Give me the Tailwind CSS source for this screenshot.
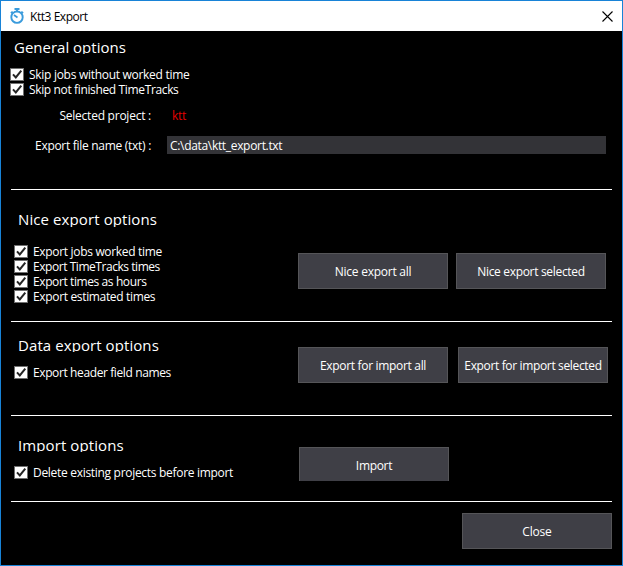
<!DOCTYPE html>
<html lang="en">
<head>
<meta charset="utf-8">
<title>Ktt3 Export</title>
<script src="https://cdn.jsdelivr.net/npm/@tailwindcss/browser@4"></script>
</head>
<body class="bg-black">
<svg class="hidden"><defs>
  <symbol id="box" viewBox="0 0 14 13"><rect x=".5" y=".5" width="13" height="12" fill="#fff" stroke="#707070"/><path d="M3 6.4 5.8 9.4 11.3 2.6" fill="none" stroke="#252525" stroke-width="2"/></symbol>
</defs></svg>
<div class="flex h-[566px] w-[623px] flex-col border border-[#1883d7] bg-black font-['Open_Sans','Noto_Sans',sans-serif] text-[12px] leading-[15px] tracking-[-0.32px] whitespace-nowrap text-white">
  <header class="flex h-[30px] shrink-0 items-center bg-white pr-[9px] pl-[8px] text-black">
    <svg class="h-4 w-4" viewBox="0 0 16 16" fill="none" stroke="#3a9bdc"><circle cx="8" cy="9.2" r="5.7" stroke-width="1.9"/><path d="M5.5 1H10.5M8 1V3.5M12.3 3.6 14 5.2M3.7 3.6 2 5.2" stroke-width="1.9"/><path d="M5 7 8.5 9.5" stroke-width="1.7"/></svg>
    <span class="ml-[5px] grow tracking-[-0.45px]">Ktt3 Export</span>
    <svg class="h-[11px] w-[11px]" viewBox="0 0 11 11"><path d="M.5.5 10.5 10.5M10.5.5.5 10.5" stroke="#000" stroke-width="1.1"/></svg>
  </header>

  <section class="mr-[10px] ml-[10px] h-[159px] shrink-0 border-b border-white pt-[6px]">
    <h1 class="ml-[3px] h-[17px] overflow-hidden text-[15px] leading-[21px] tracking-normal">General options</h1>
    <div class="mt-[13px] -ml-px">
      <label class="flex h-[15px] items-center gap-[5px]"><svg class="h-[13px] w-[14px]"><use href="#box"/></svg><span class="tracking-[-0.29px]">Skip jobs without worked time</span></label>
      <label class="flex h-[15px] items-center gap-[5px]"><svg class="h-[13px] w-[14px]"><use href="#box"/></svg><span class="tracking-[-0.36px]">Skip not finished TimeTracks</span></label>
    </div>
    <div class="mt-[11px] flex h-[15px]"><span class="w-[140px] text-right tracking-[-0.24px]">Selected project :</span><span class="ml-[21px] font-medium text-[#e60000]">ktt</span></div>
    <div class="mt-[13px] flex h-[18px] items-center"><span class="w-[140px] text-right tracking-[-0.29px]">Export file name (txt) :</span><span class="ml-[16px] h-[18px] w-[439px] bg-[#333337] pl-[3px] leading-[19px]">C:\data\ktt_export.txt</span></div>
  </section>

  <section class="mr-[10px] ml-[10px] flex h-[132px] shrink-0 border-b border-white">
    <div class="w-[287px] pt-[19px]">
      <h1 class="ml-[7px] h-[18px] overflow-hidden text-[15px] leading-[21px] tracking-[0.1px]">Nice export options</h1>
      <div class="mt-[17px] ml-[3px]">
        <label class="flex h-[15px] items-center gap-[5px]"><svg class="h-[13px] w-[14px]"><use href="#box"/></svg><span>Export jobs worked time</span></label>
        <label class="flex h-[15px] items-center gap-[5px]"><svg class="h-[13px] w-[14px]"><use href="#box"/></svg><span class="tracking-[-0.45px]">Export TimeTracks times</span></label>
        <label class="flex h-[15px] items-center gap-[5px]"><svg class="h-[13px] w-[14px]"><use href="#box"/></svg><span class="tracking-[-0.4px]">Export times as hours</span></label>
        <label class="flex h-[15px] items-center gap-[5px]"><svg class="h-[13px] w-[14px]"><use href="#box"/></svg><span class="tracking-[-0.34px]">Export estimated times</span></label>
      </div>
    </div>
    <div class="flex gap-[8px] pt-[63px]">
      <button class="h-[36px] w-[150px] border border-[#555558] bg-[#3f3f46] tracking-[-0.25px]">Nice export all</button>
      <button class="h-[36px] w-[150px] border border-[#555558] bg-[#3f3f46]">Nice export selected</button>
    </div>
  </section>

  <section class="mr-[10px] ml-[10px] flex h-[94px] shrink-0 border-b border-white">
    <div class="w-[287px] pt-[13px]">
      <h1 class="ml-[7px] h-[17px] overflow-hidden text-[15px] leading-[21px] tracking-[0.08px]">Data export options</h1>
      <label class="mt-[13px] ml-[3px] flex h-[15px] items-center gap-[5px]"><svg class="h-[13px] w-[14px]"><use href="#box"/></svg><span class="tracking-[-0.39px]">Export header field names</span></label>
    </div>
    <div class="flex gap-[10px] pt-[25px]">
      <button class="h-[36px] w-[150px] border border-[#555558] bg-[#3f3f46]">Export for import all</button>
      <button class="h-[36px] w-[150px] border border-[#555558] bg-[#3f3f46] tracking-[-0.35px]">Export for import selected</button>
    </div>
  </section>

  <section class="mr-[10px] ml-[10px] flex h-[86px] shrink-0 border-b border-white">
    <div class="w-[288px] pt-[19px]">
      <h1 class="ml-[7px] h-[17px] overflow-hidden text-[15px] leading-[21px] tracking-[0.1px]">Import options</h1>
      <label class="mt-[13px] ml-[3px] flex h-[15px] items-center gap-[5px]"><svg class="h-[13px] w-[14px]"><use href="#box"/></svg><span class="tracking-[-0.3px]">Delete existing projects before import</span></label>
    </div>
    <div class="pt-[31px]">
      <button class="block h-[34px] w-[150px] border border-b-0 border-[#555558] bg-[#3f3f46] pt-[2px]">Import</button>
    </div>
  </section>

  <footer class="flex justify-end pt-[11px] pr-[10px]">
    <button class="h-[36px] w-[150px] border border-[#555558] bg-[#3f3f46] tracking-[-0.2px]">Close</button>
  </footer>
</div>
</body>
</html>
